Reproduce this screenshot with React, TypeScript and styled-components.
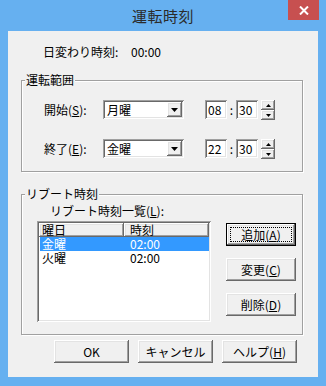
import React from 'react';
import styled, { createGlobalStyle, css } from 'styled-components';

const GlobalStyle = createGlobalStyle`
  html, body {
    margin: 0;
    padding: 0;
    background: #ffffff;
  }
  body {
    font-family: "Noto Sans CJK JP", "Noto Sans", sans-serif;
    font-size: 12px;
    color: #000;
  }
`;

const FONT = `"Noto Sans CJK JP", "Noto Sans", sans-serif`;
const FACE = '#f0f0f0';

const raised = css`
  box-shadow: inset -1px -1px #696969, inset 1px 1px #ffffff, inset -2px -2px #a0a0a0,
    inset 2px 2px #e3e3e3;
`;

const sunken = css`
  box-shadow: inset 1px 1px #a0a0a0, inset -1px -1px #ffffff, inset 2px 2px #696969,
    inset -2px -2px #e3e3e3;
`;

const Window = styled.div`
  width: 326px;
  height: 386px;
  background: #66b0f0;
  display: flex;
  flex-direction: column;
  box-sizing: border-box;
`;

const TitleBar = styled.div`
  display: grid;
  grid-template-columns: 1fr auto 1fr;
  align-items: start;
  height: 31px;
  flex-shrink: 0;
`;

const Title = styled.div`
  grid-column: 2;
  font-family: ${FONT};
  font-size: 15px;
  line-height: 31px;
  color: #2b2b2b;
  letter-spacing: 0.5px;
`;

const CloseButton = styled.div`
  grid-column: 3;
  justify-self: end;
  width: 31px;
  height: 20px;
  margin-right: 7px;
  background: #c75050;
  display: flex;
  align-items: center;
  justify-content: center;
`;

const Client = styled.div`
  margin: 0 8px;
  height: 346px;
  background: ${FACE};
  display: flex;
  flex-direction: column;
  font-family: ${FONT};
  font-size: 12px;
  line-height: 14px;
`;

const InfoRow = styled.div`
  display: flex;
  margin: 14px 0 0 35px;
`;

const InfoLabel = styled.span`
  width: 88px;
`;

const GroupBox = styled.div<{ $top: number }>`
  width: 282px;
  box-sizing: border-box;
  margin: ${p => p.$top}px 0 0 13px;
  border: 1px solid #a0a0a0;
  box-shadow: inset 1px 1px #ffffff, 1px 1px #ffffff;
  display: flex;
  flex-direction: column;
`;

const GroupTitle = styled.span`
  align-self: flex-start;
  margin: -8px 0 0 3px;
  padding: 0 1px;
  background: ${FACE};
  line-height: 14px;
`;

const RangeRows = styled.div`
  display: flex;
  flex-direction: column;
  gap: 20px;
  margin: 13px 0 0 22px;
  padding-bottom: 13px;
`;

const RangeRow = styled.div`
  display: grid;
  grid-template-columns: 59px 81px 21px 22px 9px 22px 3px 14px;
  align-items: start;
  height: 19px;
`;

const FieldLabel = styled.span`
  grid-column: 1;
  line-height: 19px;
`;

const Combo = styled.div`
  grid-column: 2;
  height: 19px;
  background: #ffffff;
  ${sunken};
  display: flex;
  align-items: center;
  padding: 2px;
  box-sizing: border-box;
`;

const ComboText = styled.span`
  flex: 1;
  padding-left: 2px;
  line-height: 15px;
`;

const DropButton = styled.div`
  width: 15px;
  height: 15px;
  background: ${FACE};
  ${raised};
  display: flex;
  align-items: center;
  justify-content: center;
`;

const TimeBox = styled.div<{ $col: number }>`
  grid-column: ${p => p.$col};
  height: 19px;
  background: #ffffff;
  ${sunken};
  box-sizing: border-box;
  padding: 2px 0 0 3px;
  line-height: 15px;
`;

const Colon = styled.span`
  grid-column: 5;
  text-align: center;
  line-height: 19px;
`;

const Spin = styled.div`
  grid-column: 8;
  display: flex;
  flex-direction: column;
  width: 14px;
`;

const SpinButton = styled.div`
  height: 10px;
  background: ${FACE};
  ${raised};
  display: flex;
  align-items: center;
  justify-content: center;
`;

const RebootBody = styled.div`
  display: flex;
  margin: 3px 0 0 15px;
  padding-bottom: 12px;
`;

const ListColumn = styled.div`
  display: flex;
  flex-direction: column;
`;

const ListLabel = styled.span`
  margin-left: 13px;
  line-height: 14px;
`;

const ListView = styled.div`
  margin-top: 3px;
  width: 174px;
  height: 101px;
  background: #ffffff;
  ${sunken};
  box-sizing: border-box;
  padding: 2px;
  display: flex;
  flex-direction: column;
  overflow: hidden;
`;

const HeaderRow = styled.div`
  display: grid;
  grid-template-columns: 85px 1fr;
  height: 14px;
`;

const HeaderCell = styled.div<{ $pad: number }>`
  background: ${FACE};
  ${raised};
  padding-left: ${p => p.$pad}px;
  line-height: 14px;
`;

const ListRow = styled.div<{ $selected?: boolean }>`
  display: grid;
  grid-template-columns: 84px 1fr;
  height: 14px;
  line-height: 14px;
  margin-left: 1px;
  background: ${p => (p.$selected ? '#3399ff' : 'transparent')};
  color: ${p => (p.$selected ? '#ffffff' : '#000000')};
`;

const Cell = styled.span<{ $pad: number }>`
  padding-left: ${p => p.$pad}px;
`;

const SideButtons = styled.div`
  display: flex;
  flex-direction: column;
  gap: 12px;
  margin: 19px 0 0 15px;
`;

const Button = styled.button<{ $width: number; $default?: boolean }>`
  width: ${p => p.$width}px;
  height: 23px;
  padding: 0;
  border: none;
  background: ${FACE};
  font-family: ${FONT};
  font-size: 12px;
  line-height: 14px;
  color: #000;
  ${raised};
  ${p =>
    p.$default &&
    css`
      box-shadow: inset 0 0 0 1px #000000, inset -2px -2px #696969, inset 2px 2px #ffffff,
        inset -3px -3px #a0a0a0, inset 3px 3px #e3e3e3;
      outline: 1px dotted #000000;
      outline-offset: -5px;
    `};
`;

const Footer = styled.div`
  display: flex;
  gap: 9px;
  margin: 5px 0 0 46px;
`;

const Arrow = ({ up }: { up?: boolean }) => (
  <svg width="7" height="4" viewBox="0 0 7 4">
    <path d={up ? 'M3.5 0 L7 4 L0 4 Z' : 'M0 0 L7 0 L3.5 4 Z'} fill="#000" />
  </svg>
);

const SmallArrow = ({ up }: { up?: boolean }) => (
  <svg width="5" height="3" viewBox="0 0 5 3">
    <path d={up ? 'M2.5 0 L5 3 L0 3 Z' : 'M0 0 L5 0 L2.5 3 Z'} fill="#000" />
  </svg>
);

interface RangeProps {
  label: string;
  mnemonic: string;
  day: string;
  hour: string;
  minute: string;
}

function Range({ label, mnemonic, day, hour, minute }: RangeProps) {
  return (
    <RangeRow>
      <FieldLabel>
        {label}(<u>{mnemonic}</u>):
      </FieldLabel>
      <Combo>
        <ComboText>{day}</ComboText>
        <DropButton>
          <Arrow />
        </DropButton>
      </Combo>
      <TimeBox $col={4}>{hour}</TimeBox>
      <Colon>:</Colon>
      <TimeBox $col={6}>{minute}</TimeBox>
      <Spin>
        <SpinButton>
          <SmallArrow up />
        </SpinButton>
        <SpinButton>
          <SmallArrow />
        </SpinButton>
      </Spin>
    </RangeRow>
  );
}

const reboots = [
  { day: '金曜', time: '02:00', selected: true },
  { day: '火曜', time: '02:00', selected: false }
];

export default function App() {
  return (
    <>
      <GlobalStyle />
      <Window>
        <TitleBar>
          <Title>運転時刻</Title>
          <CloseButton>
            <svg width="10" height="9" viewBox="0 0 10 9">
              <path d="M1 0.5 L9 8.5 M9 0.5 L1 8.5" stroke="#fff" strokeWidth="2" />
            </svg>
          </CloseButton>
        </TitleBar>
        <Client>
          <InfoRow>
            <InfoLabel>日変わり時刻:</InfoLabel>
            <span>00:00</span>
          </InfoRow>

          <GroupBox $top={21}>
            <GroupTitle>運転範囲</GroupTitle>
            <RangeRows>
              <Range label="開始" mnemonic="S" day="月曜" hour="08" minute="30" />
              <Range label="終了" mnemonic="E" day="金曜" hour="22" minute="30" />
            </RangeRows>
          </GroupBox>

          <GroupBox $top={22}>
            <GroupTitle>リブート時刻</GroupTitle>
            <RebootBody>
              <ListColumn>
                <ListLabel>
                  リブート時刻一覧(<u>L</u>):
                </ListLabel>
                <ListView>
                  <HeaderRow>
                    <HeaderCell $pad={3}>曜日</HeaderCell>
                    <HeaderCell $pad={6}>時刻</HeaderCell>
                  </HeaderRow>
                  {reboots.map(r => (
                    <ListRow key={r.day} $selected={r.selected}>
                      <Cell $pad={2}>{r.day}</Cell>
                      <Cell $pad={6}>{r.time}</Cell>
                    </ListRow>
                  ))}
                </ListView>
              </ListColumn>
              <SideButtons>
                <Button $width={70} $default>
                  追加(<u>A</u>)
                </Button>
                <Button $width={70}>
                  変更(<u>C</u>)
                </Button>
                <Button $width={70}>
                  削除(<u>D</u>)
                </Button>
              </SideButtons>
            </RebootBody>
          </GroupBox>

          <Footer>
            <Button $width={75}>OK</Button>
            <Button $width={75}>キャンセル</Button>
            <Button $width={75}>
              ヘルプ(<u>H</u>)
            </Button>
          </Footer>
        </Client>
      </Window>
    </>
  );
}
